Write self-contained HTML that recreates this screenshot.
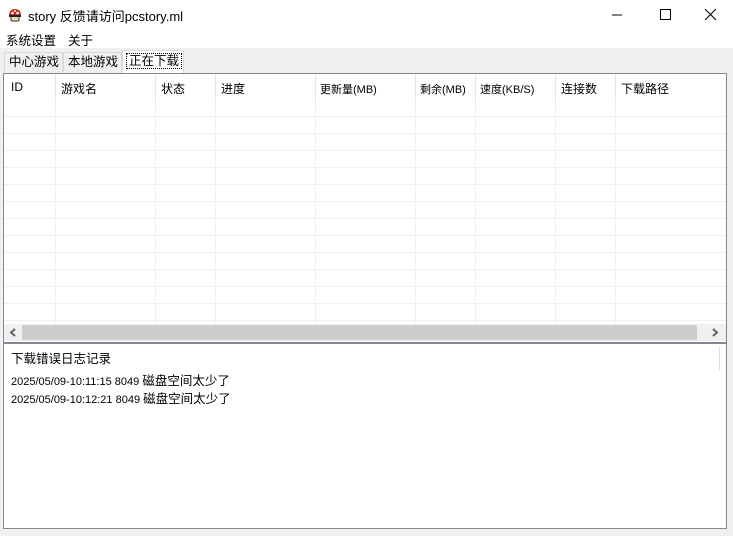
<!DOCTYPE html>
<html><head><meta charset="utf-8"><style>
*{margin:0;padding:0;box-sizing:border-box}
body{width:733px;height:536px;background:#f0f0f0;font-family:"Liberation Sans","Noto Sans CJK SC",sans-serif;font-size:12px;color:#000;position:relative;overflow:hidden}
.abs{position:absolute}
.title{left:0;top:0;width:733px;height:30px;background:#fff}
.menu{left:0;top:30px;width:733px;height:18px;background:#fff}
.tab{top:52px;height:20px;border:1px solid #d9d9d9;border-bottom:none;background:#f0f0f0;padding:0 4px;font-size:12.5px;white-space:nowrap;line-height:18px}
</style></head><body>
<div class="abs title"></div>
<svg class="abs" style="left:7px;top:7px" width="16" height="16" viewBox="0 0 16 16">
<path d="M2 9 Q2 2 8 2 Q14 2 14 9 Z" fill="#c9271b"/>
<circle cx="5.5" cy="6" r="1.3" fill="#fff"/><circle cx="10.5" cy="6" r="1.3" fill="#fff"/><circle cx="8" cy="4" r="1" fill="#fff"/>
<rect x="4" y="9" width="8" height="5" rx="1" fill="#f1d7b0" stroke="#333" stroke-width="1"/>
<rect x="2" y="8" width="12" height="2" fill="#222"/>
</svg>
<div class="abs" style="left:28px;top:6px;font-size:13px">story 反馈请访问pcstory.ml</div>
<svg class="abs" style="left:612px;top:8px" width="110" height="14" viewBox="0 0 110 14">
<line x1="0" y1="7" x2="10" y2="7" stroke="#000"/>
<rect x="48.5" y="1.5" width="10" height="10" fill="none" stroke="#000"/>
<path d="M93 1 L104 12 M104 1 L93 12" stroke="#000"/>
</svg>
<div class="abs menu"></div>
<div class="abs" style="left:6px;top:30px;font-size:12.5px">系统设置</div>
<div class="abs" style="left:68px;top:30px;font-size:12.5px">关于</div>
<div class="abs tab" style="left:4px;width:59px">中心游戏</div>
<div class="abs tab" style="left:63px;width:59px">本地游戏</div>
<div class="abs tab" style="left:122px;top:50px;height:23px;width:62px;background:#fff;border-color:#d9d9d9;padding-top:1px"><span style="outline:1px dotted #000;padding:0 2px">正在下载</span></div>
<div class="abs" style="left:3px;top:73px;width:724px;height:270px;border:1px solid #828790;background:#fff"></div>
<svg class="abs" style="left:4px;top:74px" width="722" height="250">
<g stroke="#f0f0f0" stroke-width="1">
<line x1="51.5" y1="0" x2="51.5" y2="250"/><line x1="151.5" y1="0" x2="151.5" y2="250"/><line x1="211.5" y1="0" x2="211.5" y2="250"/><line x1="311.5" y1="0" x2="311.5" y2="250"/><line x1="411.5" y1="0" x2="411.5" y2="250"/><line x1="471.5" y1="0" x2="471.5" y2="250"/><line x1="551.5" y1="0" x2="551.5" y2="250"/><line x1="611.5" y1="0" x2="611.5" y2="250"/>
<line x1="0" y1="42.5" x2="722" y2="42.5"/><line x1="0" y1="59.5" x2="722" y2="59.5"/><line x1="0" y1="76.5" x2="722" y2="76.5"/><line x1="0" y1="93.5" x2="722" y2="93.5"/><line x1="0" y1="110.5" x2="722" y2="110.5"/><line x1="0" y1="127.5" x2="722" y2="127.5"/><line x1="0" y1="144.5" x2="722" y2="144.5"/><line x1="0" y1="161.5" x2="722" y2="161.5"/><line x1="0" y1="178.5" x2="722" y2="178.5"/><line x1="0" y1="195.5" x2="722" y2="195.5"/><line x1="0" y1="212.5" x2="722" y2="212.5"/><line x1="0" y1="229.5" x2="722" y2="229.5"/><line x1="0" y1="246.5" x2="722" y2="246.5"/>
</g>
<rect x="0" y="0" width="722" height="26" fill="#fff"/>
<g stroke="#e5e5e5"><line x1="51.5" y1="0" x2="51.5" y2="26"/><line x1="151.5" y1="0" x2="151.5" y2="26"/><line x1="211.5" y1="0" x2="211.5" y2="26"/><line x1="311.5" y1="0" x2="311.5" y2="26"/><line x1="411.5" y1="0" x2="411.5" y2="26"/><line x1="471.5" y1="0" x2="471.5" y2="26"/><line x1="551.5" y1="0" x2="551.5" y2="26"/><line x1="611.5" y1="0" x2="611.5" y2="26"/></g>
</svg>
<div class="abs" style="left:11px;top:80px">ID</div>
<div class="abs" style="left:61px;top:80px">游戏名</div>
<div class="abs" style="left:161px;top:80px">状态</div>
<div class="abs" style="left:221px;top:80px">进度</div>
<div class="abs" style="left:320px;top:81px;font-size:11px">更新量(MB)</div>
<div class="abs" style="left:420px;top:81px;font-size:11px">剩余(MB)</div>
<div class="abs" style="left:480px;top:81px;font-size:11px">速度(KB/S)</div>
<div class="abs" style="left:561px;top:80px">连接数</div>
<div class="abs" style="left:621px;top:80px">下载路径</div>
<div class="abs" style="left:4px;top:324px;width:722px;height:17px;background:#f0f0f0"></div>
<div class="abs" style="left:22px;top:325px;width:675px;height:15px;background:#cdcdcd"></div>
<svg class="abs" style="left:9px;top:328px" width="8" height="9"><path d="M6 1 L2 4.5 L6 8" fill="none" stroke="#606060" stroke-width="2"/></svg>
<svg class="abs" style="left:711px;top:328px" width="8" height="9"><path d="M2 1 L6 4.5 L2 8" fill="none" stroke="#606060" stroke-width="2"/></svg>
<div class="abs" style="left:3px;top:343px;width:724px;height:186px;border:1px solid #828790;background:#fff"></div>
<div class="abs" style="left:719px;top:347px;width:1px;height:24px;background:#dcdcdc"></div>
<div class="abs" style="left:11px;top:348px;font-size:12.5px">下载错误日志记录</div>
<div class="abs" style="left:11px;top:370px;font-size:11px;white-space:nowrap">2025/05/09-10:11:15 8049 <span style="font-size:12.5px">磁盘空间太少了</span></div>
<div class="abs" style="left:11px;top:388px;font-size:11px;white-space:nowrap">2025/05/09-10:12:21 8049 <span style="font-size:12.5px">磁盘空间太少了</span></div>
</body></html>
